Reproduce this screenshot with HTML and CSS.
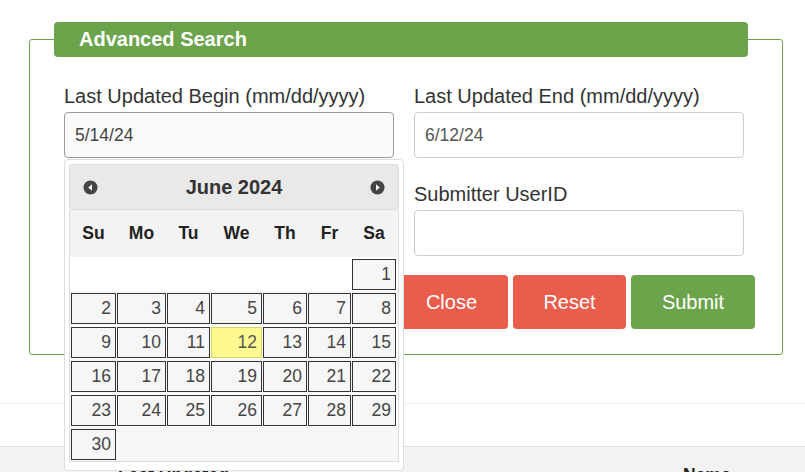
FILE: index.html
```html
<!DOCTYPE html>
<html lang="en">
<head>
    <meta charset="UTF-8">
    <meta name="viewport" content="width=device-width, initial-scale=1.0">
    <title>Advanced Search</title>
    <link rel="stylesheet" href="styles.css">
</head>
<body>

  <div class="search-panel">
    <fieldset class="search-box">
      <legend>Advanced Search</legend>

      <div class="search-grid">
        <div class="field date-field">
          <label>Last Updated Begin (mm/dd/yyyy)</label>
          <input class="focused" type="text" value="5/14/24" autofocus>

          <div class="datepicker">
            <div class="dp-header">
              <svg class="dp-nav" viewBox="0 0 16 16" width="15" height="15"><circle cx="8" cy="8" r="7.5" fill="#444"/><path d="M9.6 4.6 L5.6 8 L9.6 11.4Z" fill="#fff"/></svg>
              <span>June 2024</span>
              <svg class="dp-nav" viewBox="0 0 16 16" width="15" height="15"><circle cx="8" cy="8" r="7.5" fill="#444"/><path d="M6.4 4.6 L10.4 8 L6.4 11.4Z" fill="#fff"/></svg>
            </div>
            <div class="dp-body">
              <div class="dp-dow">
                <span>Su</span><span>Mo</span><span>Tu</span><span>We</span><span>Th</span><span>Fr</span><span>Sa</span>
              </div>
              <div class="dp-weeks">
                <div class="dp-week">
                  <span></span><span></span><span></span><span></span><span></span><span></span>
                  <a class="dp-day">1</a>
                </div>
                <div class="dp-week">
                  <a class="dp-day">2</a><a class="dp-day">3</a><a class="dp-day">4</a><a class="dp-day">5</a><a class="dp-day">6</a><a class="dp-day">7</a><a class="dp-day">8</a>
                </div>
                <div class="dp-week">
                  <a class="dp-day">9</a><a class="dp-day">10</a><a class="dp-day">11</a><a class="dp-day highlight">12</a><a class="dp-day">13</a><a class="dp-day">14</a><a class="dp-day">15</a>
                </div>
                <div class="dp-week">
                  <a class="dp-day">16</a><a class="dp-day">17</a><a class="dp-day">18</a><a class="dp-day">19</a><a class="dp-day">20</a><a class="dp-day">21</a><a class="dp-day">22</a>
                </div>
                <div class="dp-week">
                  <a class="dp-day">23</a><a class="dp-day">24</a><a class="dp-day">25</a><a class="dp-day">26</a><a class="dp-day">27</a><a class="dp-day">28</a><a class="dp-day">29</a>
                </div>
                <div class="dp-week">
                  <a class="dp-day">30</a>
                </div>
              </div>
            </div>
          </div>
        </div>

        <div class="field">
          <label>Last Updated End (mm/dd/yyyy)</label>
          <input type="text" value="6/12/24">
        </div>

        <div class="field"></div>

        <div class="field">
          <label>Submitter UserID</label>
          <input type="text">
        </div>
      </div>

      <div class="actions">
        <button class="btn btn-red">Close</button>
        <button class="btn btn-red">Reset</button>
        <button class="btn btn-green">Submit</button>
      </div>
    </fieldset>
  </div>

  <div class="results">
    <div class="results-head">
      <span class="col-updated">Last Updated</span>
      <span class="col-name">Name</span>
    </div>
  </div>

</body>
</html>
```

FILE: styles.css
```css
body {
  margin: 0;
  padding: 22px 0 0;
  font-family: "Liberation Sans", Arial, sans-serif;
  color: #333;
  background: #fff;
}

.search-panel {
  padding: 0 25px 48px 29px;
  border-bottom: 1px solid #f2f2f2;
}

.search-box {
  margin: 0;
  padding: 25px 34px 25px;
  border: 1px solid #6ca44c;
  border-radius: 3px;
}

.search-box legend {
  margin-left: -10px;
  width: 694px;
  box-sizing: border-box;
  height: 35px;
  line-height: 35px;
  padding: 0 25px;
  background: #6ca44c;
  border-radius: 4px;
  color: #fff;
  font-size: 20px;
  font-weight: bold;
}

.search-grid {
  display: grid;
  grid-template-columns: 330px 330px;
  column-gap: 20px;
  row-gap: 22px;
}

.field {
  display: flex;
  flex-direction: column;
}

.date-field {
  position: relative;
}

.field label {
  font-size: 20px;
  line-height: 28px;
  margin-bottom: 2px;
  color: #333;
}

.field input {
  height: 46px;
  box-sizing: border-box;
  padding: 0 10px;
  border: 1px solid #ccc;
  border-radius: 4px;
  font-family: inherit;
  font-size: 17.5px;
  color: #555;
  background: #fff;
  outline: none;
}

.field input.focused {
  border-color: #9a9a9a;
  background: #fafafa;
  color: #444;
}

.actions {
  display: flex;
  justify-content: flex-end;
  gap: 5px;
  margin: 19px -7px 0 0;
}

.btn {
  height: 54px;
  padding: 0 30px;
  border: 0;
  border-radius: 4px;
  color: #fff;
  font-family: inherit;
  font-size: 20px;
  cursor: pointer;
}

.btn-red {
  background: #ea5d4c;
  min-width: 113px;
}

.btn-green {
  background: #6ca44c;
  min-width: 124px;
}

/* datepicker popup */
.datepicker {
  position: absolute;
  top: 100%;
  left: 0;
  z-index: 10;
  margin-top: 1px;
  width: 340px;
  box-sizing: border-box;
  padding: 4px 4px 8px;
  background: #fff;
  border: 1px solid #ddd;
  border-radius: 4px;
}

.dp-header {
  display: flex;
  align-items: center;
  justify-content: space-between;
  height: 46px;
  box-sizing: border-box;
  padding: 0 13px;
  background: #e9e9e9;
  border: 1px solid #ddd;
  border-radius: 3px;
  font-size: 20px;
  font-weight: bold;
  color: #333;
}

.dp-nav {
  display: block;
}

.dp-body {
  border: 1px solid #ddd;
  border-top: 0;
  background: #f8f8f8;
}

.dp-dow,
.dp-week {
  display: grid;
  grid-template-columns: 45px 49px 43px 51px 44px 43px 44px;
  column-gap: 1px;
  padding: 0 1px;
}

.dp-dow {
  height: 47px;
  align-items: center;
  background: #f3f3f3;
  text-align: center;
  font-size: 17.5px;
  font-weight: bold;
  color: #222;
}

.dp-week {
  height: 34px;
  box-sizing: border-box;
  padding: 2px 1px 1px;
  background: #fff;
}

.dp-week:nth-child(even) {
  background: #f7f7f7;
}

.dp-day {
  display: block;
  height: 31px;
  box-sizing: border-box;
  padding-right: 4px;
  border: 1px solid #333;
  background: #f6f6f6;
  color: #454545;
  font-size: 17.5px;
  line-height: 29px;
  text-align: right;
}

.dp-day.highlight {
  background: #fffa90;
  border-color: #dad55e;
  color: #555;
}

/* results table head */
.results {
  margin-top: 42px;
}

.results-head {
  display: flex;
  height: 60px;
  padding-top: 16px;
  box-sizing: border-box;
  border-top: 1px solid #ddd;
  background: #f2f2f2;
  font-size: 17.5px;
  font-weight: bold;
  line-height: 25px;
  color: #222;
}

.col-updated {
  margin-left: 118px;
  width: 565px;
}
```
